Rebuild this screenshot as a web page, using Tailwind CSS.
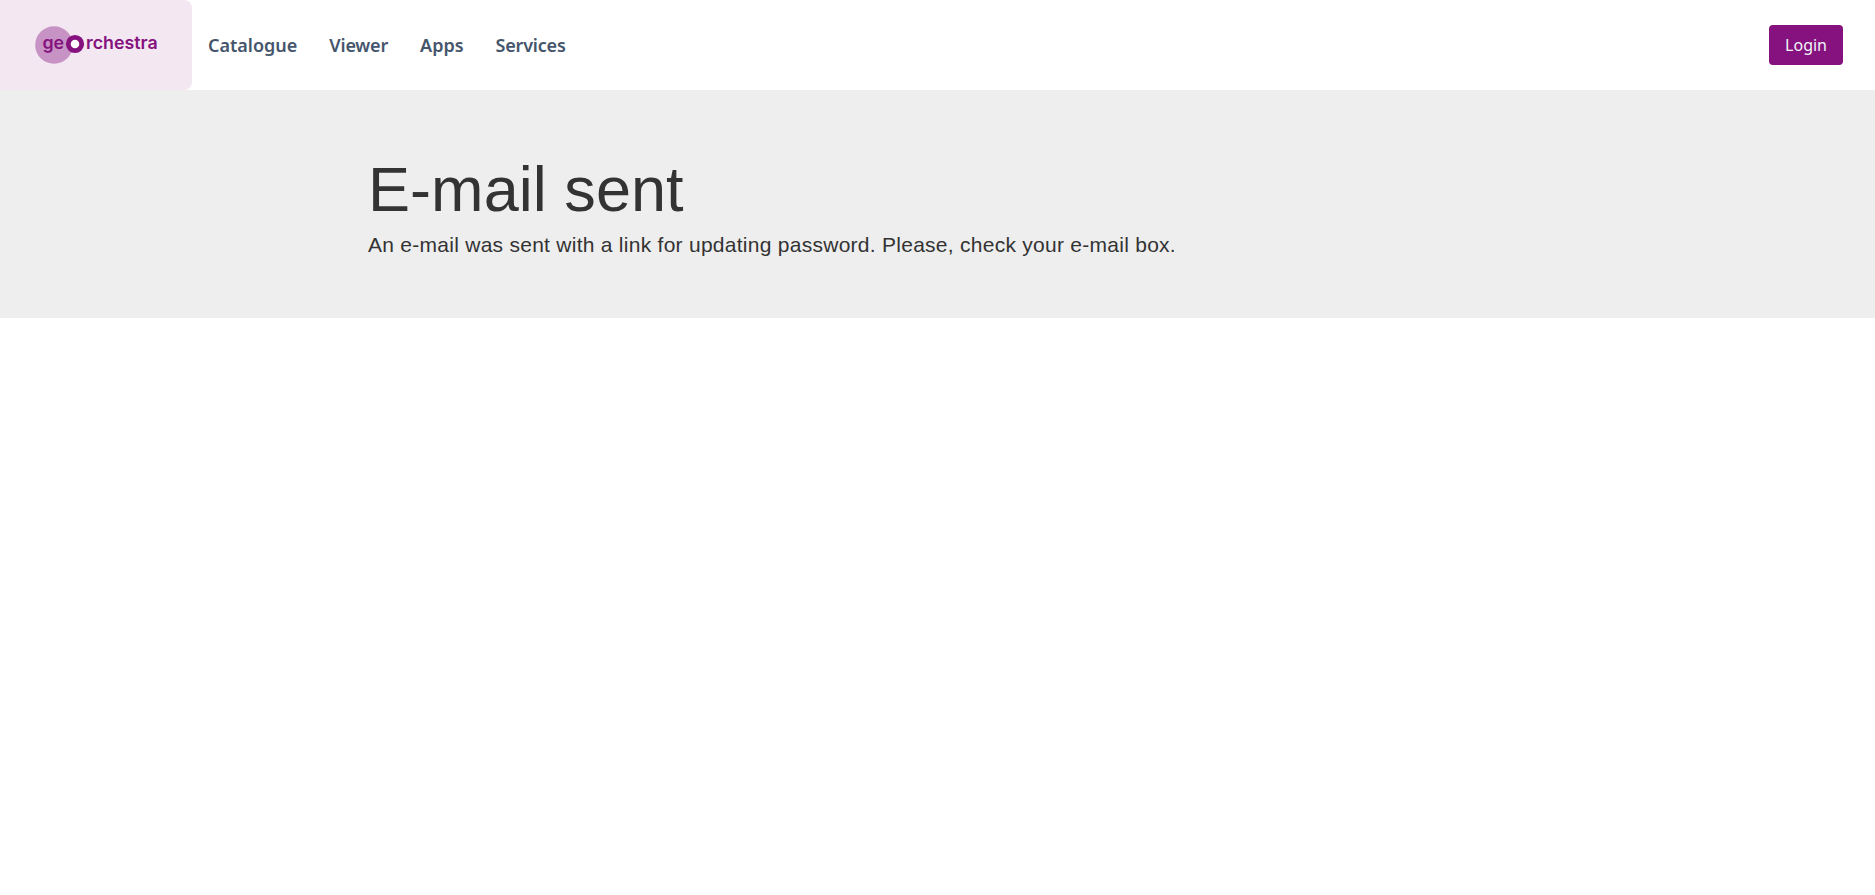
<!DOCTYPE html>
<html lang="en"><head><meta charset="utf-8"><title>geOrchestra</title>
<script src="https://cdn.jsdelivr.net/npm/@tailwindcss/browser@4"></script></head>
<body class="bg-white">
<header class="h-[90px] flex items-center justify-between pr-8 font-['Noto_Sans',sans-serif]">
<div class="flex items-center h-full">
<a class="w-48 h-full bg-[#f3e7f2] rounded-r-lg flex items-center justify-center">
<svg width="192" height="90" viewBox="0 0 192 90"><circle cx="54" cy="45" r="18.8" fill="#c792c4"/><g fill="#85127e" font-family="Inter, sans-serif" font-weight="600" font-size="17.8"><text x="42.5" y="49.2" textLength="21.5">ge</text><text x="86" y="49.2" textLength="71.7">rchestra</text></g><circle cx="75" cy="44" r="6.7" fill="#fff" stroke="#85127e" stroke-width="4.8"/></svg>
</a>
<nav class="flex gap-8 pl-4 text-lg font-semibold text-slate-600"><a>Catalogue</a><a class="tracking-[-0.2px]">Viewer</a><a>Apps</a><a class="tracking-[-0.2px]">Services</a></nav>
</div>
<a class="bg-[#85127e] text-slate-100 rounded px-4 py-2 text-base">Login</a>
</header>
<main class="bg-[#eee] h-[228px] pl-[368px] pt-[59px] text-[#333] font-['Liberation_Sans',Arial,sans-serif]">
<h1 class="text-[63px] leading-[80px] mb-px tracking-[0.05px]">E-mail sent</h1>
<p class="text-[21px] leading-[30px] tracking-[0.267px]">An e-mail was sent with a link for updating password. Please, check your e-mail box.</p>
</main>
</body></html>
